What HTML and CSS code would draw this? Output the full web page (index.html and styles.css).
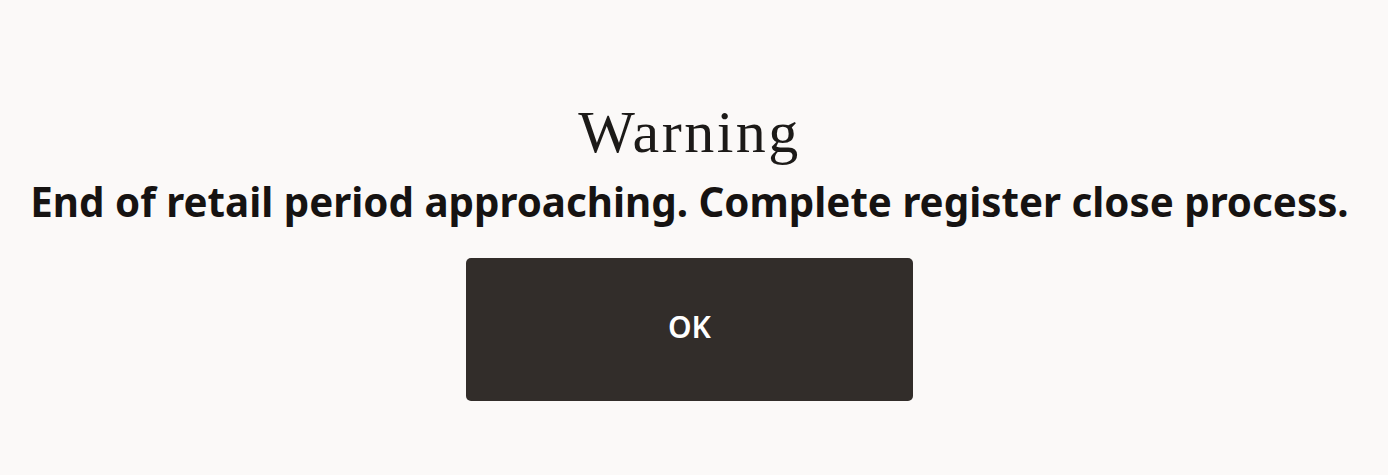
FILE: index.html
```html
<!DOCTYPE html>
<html lang="en">
<head>
<meta charset="utf-8">
<title>Warning</title>
<link rel="stylesheet" href="styles.css">
</head>
<body>
<main class="dialog">
  <h1 class="title">Warning</h1>
  <p class="message">End of retail period approaching. Complete register close process.</p>
  <button class="ok-btn" type="button">OK</button>
</main>
</body>
</html>
```
FILE: styles.css
```css
html, body {
  margin: 0;
  padding: 0;
  background: #fbf9f8;
  height: 100%;
}
.dialog {
  display: flex;
  flex-direction: column;
  align-items: center;
  padding: 99px 9px 0 0;
}
.title {
  margin: 0;
  font-family: "Liberation Serif", "DejaVu Serif", serif;
  font-weight: normal;
  font-size: 60px;
  line-height: 66px;
  letter-spacing: 2.5px;
  color: #1c1a18;
}
.message {
  margin: 13px 0 0;
  font-family: "Noto Sans", "Open Sans", sans-serif;
  font-weight: 700;
  font-size: 40.3px;
  line-height: 48px;
  color: #161312;
  white-space: nowrap;
}
.ok-btn {
  margin-top: 32px;
  width: 447px;
  height: 143px;
  padding: 0 0 7px;
  border: none;
  border-radius: 5px;
  background: #322d2a;
  color: #ffffff;
  font-family: "Noto Sans", "Open Sans", sans-serif;
  font-weight: 600;
  font-size: 30px;
}
```
